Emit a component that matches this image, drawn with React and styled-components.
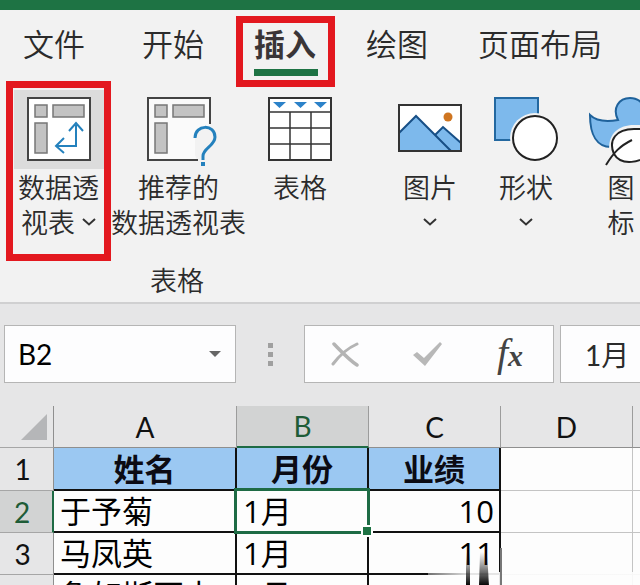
import React from "react";
import styled, { createGlobalStyle } from "styled-components";

const TABS = ["文件", "开始", "插入", "绘图", "页面布局"];

const COLUMNS = [
  { name: "A", title: "姓名" },
  { name: "B", title: "月份" },
  { name: "C", title: "业绩" },
  { name: "D" },
  { name: "E" },
];

const ROWS = [
  ["于予菊", "1月", "10"],
  ["马凤英", "1月", "11"],
  ["鲁如斯亚卡", "1月", ""],
];

export default function App() {
  return (
    <Page>
      <GlobalStyle />
      <TitleBar />
      <Ribbon>
        <Tabs>
          {TABS.map((tab) => (
            <Tab key={tab} $file={tab === "文件"} $active={tab === "插入"}>
              {tab}
              {tab === "插入" && <TabMark />}
            </Tab>
          ))}
        </Tabs>
        <Groups>
          {/* Tables */}
          <Group>
            <Tools>
              <Tool $width={105}>
                <ToolIcon $hover>
                  <PivotIcon />
                </ToolIcon>
                <Label>数据透</Label>
                <Label>
                  视表 <Chevron />
                </Label>
                <ToolMark />
              </Tool>
              <Tool $width={135}>
                <ToolIcon>
                  <RecommendedIcon />
                </ToolIcon>
                <Label>推荐的</Label>
                <Label>数据透视表</Label>
              </Tool>
              <Tool $width={108}>
                <ToolIcon>
                  <TableIcon />
                </ToolIcon>
                <Label>表格</Label>
              </Tool>
            </Tools>
            <GroupLabel>表格</GroupLabel>
          </Group>
          <Divider />
          {/* Illustrations */}
          <Tools>
            <Tool $width={96}>
              <ToolIcon>
                <PictureIcon />
              </ToolIcon>
              <Label>图片</Label>
              <Label>
                <Chevron />
              </Label>
            </Tool>
            <Tool $width={96}>
              <ToolIcon>
                <ShapesIcon />
              </ToolIcon>
              <Label>形状</Label>
              <Label>
                <Chevron />
              </Label>
            </Tool>
            <Tool $width={94}>
              <ToolIcon>
                <IconsIcon />
              </ToolIcon>
              <Label>图</Label>
              <Label>标</Label>
            </Tool>
          </Tools>
        </Groups>
      </Ribbon>

      <FormulaBar>
        <NameBox>
          <NameInput aria-label="名称框" defaultValue="B2" />
          <PlainButton aria-label="展开">
            <svg width="14" height="8" viewBox="0 0 14 8">
              <path d="M1 1h12L7 7z" fill="#666" />
            </svg>
          </PlainButton>
        </NameBox>
        <Grip>
          <i />
          <i />
          <i />
        </Grip>
        <Actions>
          <PlainButton aria-label="取消">
            <svg width="28" height="26" viewBox="0 0 28 26" fill="none" stroke="#b4b4b4">
              <path d="M3 3C9 9 17 18 26 24" strokeWidth="3.5" strokeLinecap="round" />
              <path d="M26 3C17 7 8 15 2 23" strokeWidth="3" strokeLinecap="round" />
            </svg>
          </PlainButton>
          <PlainButton aria-label="输入">
            <svg width="32" height="26" viewBox="0 0 32 26">
              <path d="M1 14l4-3 7 6L28 1l2 2L13 25z" fill="#b8b8b8" />
            </svg>
          </PlainButton>
          <FxButton aria-label="插入函数">
            f<small>x</small>
          </FxButton>
        </Actions>
        <FormulaInput aria-label="编辑栏" defaultValue="1月" />
      </FormulaBar>

      <Sheet>
        <colgroup>
          <col width="54" />
          <col width="183" />
          <col width="132" />
          <col width="132" />
          <col width="132" />
          <col width="132" />
        </colgroup>
        <thead>
          <tr>
            <Corner aria-label="全选">
              <svg width="26" height="26" viewBox="0 0 26 26">
                <path d="M26 0v26H0z" fill="#b5b6b8" />
              </svg>
            </Corner>
            {COLUMNS.map(({ name }) => (
              <ColumnHead key={name} $selected={name === "B"}>
                {name}
              </ColumnHead>
            ))}
          </tr>
        </thead>
        <tbody>
          <tr>
            <RowHead>1</RowHead>
            {COLUMNS.map(({ name, title }) =>
              title ? <TitleCell key={name}>{title}</TitleCell> : <Cell key={name} />
            )}
          </tr>
          {ROWS.map((row, r) => (
            <tr key={row[0]}>
              <RowHead $selected={r === 0}>{r + 2}</RowHead>
              {COLUMNS.map(({ name }, c) => (
                <Cell key={name} $filled={c < 3} $number={c === 2}>
                  {row[c]}
                  {r === 0 && name === "B" && <Selection />}
                  {row[c] === "11" && <Smudge />}
                </Cell>
              ))}
            </tr>
          ))}
        </tbody>
      </Sheet>
    </Page>
  );
}

function Chevron() {
  return (
    <ChevronSvg width="14" height="8" viewBox="0 0 14 8">
      <path d="M1 1l6 5.5L13 1" fill="none" stroke="#333" strokeWidth="2" />
    </ChevronSvg>
  );
}

function PivotParts() {
  return (
    <g fill="#c3c3c3" stroke="#777" strokeWidth="1.5">
      <path d="M8 8h12v12H8zM26 8h31v12H26zM8 26h12v30H8z" />
    </g>
  );
}

function PivotIcon() {
  return (
    <svg width="64" height="64" viewBox="0 0 64 64" fill="none">
      <path d="M1 1h62v62H1z" fill="#fff" stroke="#444" strokeWidth="2" />
      <PivotParts />
      <path
        d="M49 28v21H29M42 34l7-8 7 8M37 41l-8 8 8 7"
        stroke="#2481bd"
        strokeWidth="2"
      />
    </svg>
  );
}

function RecommendedIcon() {
  return (
    <svg width="64" height="64" viewBox="0 0 64 64" fill="none" overflow="visible">
      <path d="M1 1h62v29L48 34v24l2 5H1z" fill="#fafafa" />
      <path d="M63 27V1H1v62h50" stroke="#444" strokeWidth="2" />
      <PivotParts />
      <path
        d="M48 41c0-14 20-14 20-1 0 9-12 11-12 19v4"
        stroke="#2481bd"
        strokeWidth="3"
      />
      <path d="M54 65h4v4h-4z" fill="#2481bd" />
    </svg>
  );
}

function TableIcon() {
  return (
    <svg width="64" height="64" viewBox="0 0 64 64" fill="none">
      <path d="M1 1h62v62H1z" fill="#fff" stroke="#333" strokeWidth="2" />
      <path d="M1 15h62M1 31h62M1 47h62M22 15v48M43 15v48" stroke="#333" strokeWidth="1.5" />
      <path d="M5 5h13l-6.500 6zM26 5h13l-6.500 6zM46 5h13l-6.500 6z" fill="#2c82c9" />
    </svg>
  );
}

function PictureIcon() {
  return (
    <svg width="66" height="64" viewBox="0 0 66 64" fill="none">
      <path d="M2 8h62v46H2z" fill="#fff" />
      <path d="M37 39l9-9 18 16v8H50z" fill="#7db9ec" stroke="#174f86" strokeWidth="2" />
      <path d="M2 36l17-17 35 35H2z" fill="#7db9ec" />
      <path d="M2 36l17-17 35 35" stroke="#174f86" strokeWidth="2" />
      <circle cx="51" cy="20" r="4.500" fill="#cf7520" />
      <path d="M2 8h62v46H2z" stroke="#333" strokeWidth="2" />
    </svg>
  );
}

function ShapesIcon() {
  return (
    <svg width="64" height="64" viewBox="0 0 64 64" fill="none">
      <path d="M1 1h43v42H1z" fill="#7db9ec" stroke="#2368a0" strokeWidth="2" />
      <circle cx="41" cy="41" r="25" fill="#f2f2f2" />
      <circle cx="41" cy="41" r="22" fill="#fff" stroke="#222" strokeWidth="2" />
    </svg>
  );
}

function IconsIcon() {
  return (
    <svg width="64" height="68" viewBox="0 0 64 68" fill="none" overflow="visible">
      <path
        d="M1 18c6 6 16 7 28 5-6-12 1-22 12-22 10 0 16 8 16 16 0 10-6 16-6 16L22 50C8 50 1 38 1 18z"
        fill="#7db9ec"
        stroke="#1f629b"
        strokeWidth="2"
      />
      <path
        d="M21 58c-4-18 6-30 24-30h24v36H25z"
        fill="#f2f2f2"
      />
      <path
        d="M25 57c-6-14 2-25 20-25h19v22c-12 13-32 15-39 3z"
        fill="#fff"
        stroke="#222"
        strokeWidth="2"
      />
      <path d="M17 68c8-13 14-19 26-25" stroke="#222" strokeWidth="2" />
    </svg>
  );
}

// Faded patch where the lower rows run out under the figures
function Smudge() {
  return (
    <SmudgeSvg width="213" height="38" viewBox="0 0 213 38">
      <defs>
        <linearGradient id="smear" x1="0" y1="0" x2="0" y2="1">
          <stop offset="0" stopColor="#111" stopOpacity="0" />
          <stop offset="1" stopColor="#000" />
        </linearGradient>
        <linearGradient id="fade" x1="0" y1="0" x2="1" y2="0">
          <stop offset="0" stopColor="#fdfdfd" stopOpacity="0.4" />
          <stop offset="0.2" stopColor="#fdfdfd" stopOpacity="0.9" />
        </linearGradient>
      </defs>
      <path d="M0 24h213v14H0z" fill="url(#fade)" />
      <path d="M38 4h4v34h-4z" fill="url(#smear)" />
      <path d="M52 4h7l2 34H51z" fill="url(#smear)" />
      <path d="M72 0h2v38h-2z" fill="#777" />
    </SmudgeSvg>
  );
}

const GlobalStyle = createGlobalStyle`
  * {
    box-sizing: border-box;
  }

  body {
    margin: 0;
    background: #e6e6e7;
    font-family: "Open Sans", "Noto Sans CJK SC", sans-serif;
    color: #2b2b2b;
  }

  button,
  input {
    margin: 0;
    padding: 0;
    border: 0;
    background: none;
    font: inherit;
    color: inherit;
  }
`;

const Page = styled.div`
  height: 100vh;
  overflow: hidden;
`;

const TitleBar = styled.div`
  height: 10px;
  background: #1e7344;
`;

const Ribbon = styled.header`
  background: #f2f2f2;
  border-bottom: 2px solid #d0d0d1;
  overflow: hidden;
`;

const Tabs = styled.nav`
  display: flex;
  height: 80px;
`;

const Tab = styled.button`
  position: relative;
  flex-shrink: 0;
  padding: ${({ $file }) => ($file ? "0 32px 0 23px" : "0 25px")};
  padding-bottom: 14px;
  font-size: 31px;
  line-height: 40px;
  font-family: "Noto Sans CJK SC", sans-serif;
  font-weight: ${({ $active }) => ($active ? 700 : 350)};
  color: ${({ $active }) => ($active ? "#3a3537" : "#2b2b2b")};

  &::after {
    content: "";
    position: absolute;
    left: 25px;
    right: 23px;
    top: 59px;
    height: 7px;
    background: ${({ $active }) => ($active ? "#1e7344" : "none")};
  }
`;

const TabMark = styled.span`
  position: absolute;
  top: 6px;
  bottom: 3px;
  left: 7px;
  right: 6px;
  border: 7px solid #e3181f;
`;

const Groups = styled.div`
  display: flex;
  height: 212px;
`;

const Group = styled.section`
  display: flex;
  flex-direction: column;
  padding-left: 6px;
`;

const Tools = styled.div`
  display: flex;
  height: 171px;
`;

const Tool = styled.button`
  position: relative;
  display: flex;
  flex-direction: column;
  align-items: center;
  flex-shrink: 0;
  width: ${({ $width }) => $width}px;
  font-size: 27px;
  font-weight: 350;
  line-height: 35px;
  font-family: "Noto Sans CJK SC", sans-serif;
  white-space: nowrap;
`;

const ToolIcon = styled.span`
  display: flex;
  justify-content: center;
  width: 90px;
  height: 79px;
  padding-top: 7px;
  background: ${({ $hover }) => ($hover ? "#dcdcdc" : "none")};
`;

const ToolMark = styled.span`
  position: absolute;
  inset: -9px 0 0;
  border: 7px solid #e3181f;
`;

const Label = styled.span`
  display: flex;
  align-items: center;
  gap: 7px;
  height: 35px;
`;

const ChevronSvg = styled.svg`
  flex-shrink: 0;
`;

const GroupLabel = styled.div`
  padding-right: 6px;
  font-size: 27px;
  font-weight: 350;
  line-height: 40px;
  text-align: center;
`;

const Divider = styled.div`
  width: 1px;
  height: 202px;
  margin: 0 18px 0 10px;
  background: #555;
`;

const FormulaBar = styled.div`
  display: flex;
  height: 102px;
  padding: 21px 0 23px 4px;
`;

const Box = styled.div`
  display: flex;
  align-items: center;
  border: 1px solid #b5b5b5;
  background: #fdfdfe;
`;

const NameBox = styled(Box)`
  width: 232px;
  padding: 0 13px;
  font-family: Lato, sans-serif;
  font-size: 28px;
  color: #000;
`;

const NameInput = styled.input`
  flex: 1;
  min-width: 0;
`;

const PlainButton = styled.button`
  display: flex;
`;

const Grip = styled.div`
  display: flex;
  flex-direction: column;
  justify-content: center;
  align-items: center;
  gap: 4px;
  width: 68px;

  i {
    width: 5px;
    height: 5px;
    background: #a0a0a0;
  }
`;

const Actions = styled(Box)`
  justify-content: space-between;
  width: 250px;
  padding: 0 30px 0 26px;
`;

const FxButton = styled.button`
  font-family: "Liberation Serif", serif;
  font-size: 40px;
  font-style: italic;
  line-height: 40px;
  color: #444;

  small {
    font-size: 30px;
    font-weight: 700;
  }
`;

const FormulaInput = styled.input`
  flex: 1;
  min-width: 0;
  margin-left: 6px;
  padding-left: 24px;
  border: 1px solid #b5b5b5;
  border-right: 0;
  background: #fdfdfe;
  font-family: Lato, "Noto Sans CJK SC", sans-serif;
  font-size: 28px;
  font-weight: 400;
`;

const Sheet = styled.table`
  width: 765px;
  table-layout: fixed;
  border-collapse: separate;
  border-spacing: 0;

  th,
  td {
    height: 42px;
    padding: 0;
    line-height: 40px;
  }
`;

const Corner = styled.td`
  border-right: 1px solid #8f8f8f;
  border-bottom: 1px solid #a6a6a6;

  svg {
    display: block;
    margin: 0 6px 0 auto;
  }
`;

const ColumnHead = styled.th`
  border-right: 1px solid #9c9c9c;
  border-bottom: ${({ $selected }) => ($selected ? "2px solid #1e6b45" : "1px solid #8f8f8f")};
  background: ${({ $selected }) => ($selected ? "#d2d3d3" : "none")};
  font-family: Lato, sans-serif;
  font-size: 28px;
  font-weight: 400;
  color: ${({ $selected }) => ($selected ? "#1e5c37" : "#111")};
`;

const RowHead = styled.th`
  && {
    padding-right: 8px;
  }

  border-right: ${({ $selected }) => ($selected ? "2px solid #1e6b45" : "1px solid #8f8f8f")};
  border-bottom: 1px solid #a6a6a6;
  background: ${({ $selected }) => ($selected ? "#d2d3d3" : "none")};
  font-family: Lato, sans-serif;
  font-size: 28px;
  font-weight: 400;
  color: ${({ $selected }) => ($selected ? "#1e5c37" : "#111")};
`;

const Cell = styled.td`
  && {
    padding: ${({ $number }) => ($number ? "0 5px 0 0" : "0 0 0 6px")};
  }

  position: relative;
  border: 0 solid ${({ $filled }) => ($filled ? "#111" : "#c4c4c4")};
  border-width: ${({ $filled }) => ($filled ? "0 2px 2px 0" : "0 1px 1px 0")};
  background: #fdfdfd;
  font-size: 31px;
  font-weight: 400;
  text-align: ${({ $number }) => ($number ? "right" : "left")};
  color: #000;
  white-space: nowrap;
`;

const TitleCell = styled.td`
  && {
    height: 43px;
  }

  border: 0 solid #111;
  border-width: 0 2px 2px 0;
  background: #9bc8f2;
  font-size: 31px;
  font-weight: 700;
  text-align: center;
  color: #0b0b14;
`;

const Selection = styled.span`
  position: absolute;
  inset: -3px;
  border: 3px solid #1e6b45;
  z-index: 1;

  &::after {
    content: "";
    position: absolute;
    right: -4px;
    bottom: -4px;
    width: 8px;
    height: 8px;
    background: #1e7344;
    outline: 2px solid #fff;
  }
`;

const SmudgeSvg = styled.svg`
  position: absolute;
  top: 15px;
  left: 59px;
  z-index: 1;
`;
